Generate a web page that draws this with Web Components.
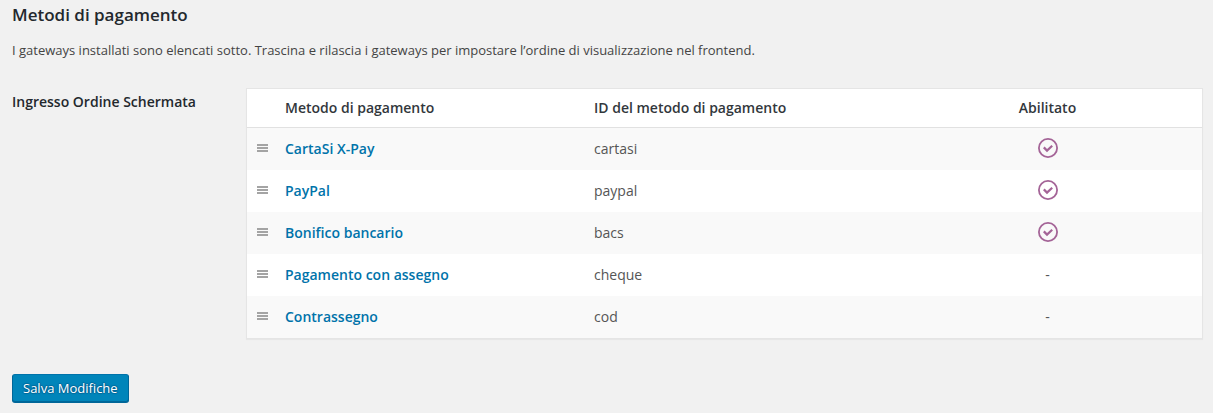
<!DOCTYPE html>
<html lang="it">
<head>
<meta charset="utf-8">
<title>Metodi di pagamento</title>
<style>
    body {
        margin: 0;
        background: #f1f1f1;
        color: #444;
        font: 13px/18px 'Open Sans', sans-serif;
    }
</style>
</head>
<body>

<settings-page>
    <span slot="title">Metodi di pagamento</span>
    <span slot="description">I gateways installati sono elencati sotto. Trascina e rilascia i gateways per impostare l’ordine di visualizzazione nel frontend.</span>

    <settings-row>
        <span slot="label">Ingresso Ordine Schermata</span>
        <gateway-table></gateway-table>
    </settings-row>

    <save-button slot="submit">Salva Modifiche</save-button>
</settings-page>

<script>
// small helper: attach a shadow root and fill it
function render(element, html) {
    const template = document.createElement('template');
    template.innerHTML = html;
    element.attachShadow({ mode: 'open' });
    element.shadowRoot.appendChild(template.content.cloneNode(true));
}

const gateways = [
    { id: 'cartasi', name: 'CartaSi X-Pay', enabled: true },
    { id: 'paypal', name: 'PayPal', enabled: true },
    { id: 'bacs', name: 'Bonifico bancario', enabled: true },
    { id: 'cheque', name: 'Pagamento con assegno', enabled: false },
    { id: 'cod', name: 'Contrassegno', enabled: false }
];

// the page: title, description, settings and the submit area
class SettingsPage extends HTMLElement {
    constructor() {
        super();
        render(this, `
            <style>
                :host {
                    display: block;
                    padding: 4px 10px 10px 12px;
                }

                h2 {
                    margin: 0;
                    color: #23282d;
                    font-size: 17px;
                    font-weight: 600;
                    line-height: 22px;
                }

                p {
                    margin: 15px 0 29px;
                }

                .submit {
                    margin-top: 35px;
                }
            </style>

            <h2><slot name="title"></slot></h2>
            <p><slot name="description"></slot></p>
            <slot></slot>
            <div class="submit"><slot name="submit"></slot></div>
        `);
    }
}

// one setting: label on the left, field on the right
class SettingsRow extends HTMLElement {
    constructor() {
        super();
        render(this, `
            <style>
                :host {
                    display: grid;
                    grid-template-columns: 224px 1fr;
                    gap: 10px;
                }

                .label {
                    padding-top: 5px;
                    color: #23282d;
                    font-size: 14px;
                    font-weight: 600;
                }
            </style>

            <div class="label"><slot name="label"></slot></div>
            <div><slot></slot></div>
        `);
    }
}

// the handle for dragging a row
class SortHandle extends HTMLElement {
    constructor() {
        super();
        render(this, `
            <style>
                :host {
                    display: block;
                    padding-bottom: 2px;
                    cursor: move;
                }

                svg {
                    display: block;
                }
            </style>

            <svg width="11" height="8" viewBox="0 0 11 8" fill="#a4a4a4" aria-hidden="true">
                <path d="M0 0h11v2H0zM0 3h11v2H0zM0 6h11v2H0z"/>
            </svg>
        `);
    }
}

// the round tick of an enabled gateway
class EnabledIcon extends HTMLElement {
    constructor() {
        super();
        render(this, `
            <style>
                :host {
                    display: block;
                    padding-bottom: 2px;
                }

                svg {
                    display: block;
                    margin: 0 auto;
                }
            </style>

            <svg width="20" height="20" viewBox="0 0 20 20" fill="none" stroke="#a46497" role="img" aria-label="Abilitato">
                <circle cx="10" cy="10" r="9.1" stroke-width="1.8"/>
                <path d="M5.8 9.4l3.2 3.2 5.2-4.9" stroke-width="2.2"/>
            </svg>
        `);
    }
}

class GatewayTable extends HTMLElement {
    constructor() {
        super();

        const rows = gateways.map(gateway => `
            <tr>
                <td class="sort"><sort-handle></sort-handle></td>
                <td><a href="#${gateway.id}">${gateway.name}</a></td>
                <td>${gateway.id}</td>
                <td class="status">${gateway.enabled ? '<enabled-icon></enabled-icon>' : '-'}</td>
            </tr>
        `).join('');

        render(this, `
            <style>
                :host {
                    display: block;
                    border: 1px solid #e5e5e5;
                    background: #fff;
                    box-shadow: 0 1px 1px rgba(0, 0, 0, 0.04);
                    font-size: 14px;
                }

                table {
                    width: 100%;
                    table-layout: fixed;
                    border-collapse: separate;
                    border-spacing: 0;
                }

                th, td {
                    padding: 10px;
                    text-align: left;
                    vertical-align: middle;
                }

                th {
                    border-bottom: 1px solid #e1e1e1;
                    color: #32373c;
                    font-weight: 600;
                }

                td {
                    height: 22px;
                    color: #555;
                }

                tbody tr:nth-child(odd) {
                    background: #f9f9f9;
                }

                .sort {
                    width: 8px;
                }

                .status {
                    text-align: center;
                }

                a {
                    color: #0073aa;
                    font-weight: 600;
                    text-decoration: none;
                }
            </style>

            <table>
                <thead>
                    <tr>
                        <th class="sort"></th>
                        <th>Metodo di pagamento</th>
                        <th>ID del metodo di pagamento</th>
                        <th class="status">Abilitato</th>
                    </tr>
                </thead>
                <tbody>${rows}</tbody>
            </table>
        `);
    }
}

class SaveButton extends HTMLElement {
    constructor() {
        super();
        render(this, `
            <style>
                :host {
                    display: block;
                }

                button {
                    display: block;
                    height: 28px;
                    padding: 0 10px;
                    border: 1px solid;
                    border-color: #0073aa #006799 #006799;
                    border-radius: 3px;
                    background: #0085ba;
                    box-shadow: 0 1px 0 #006799;
                    color: #fff;
                    cursor: pointer;
                    font: 13px/26px 'Open Sans', sans-serif;
                    text-shadow: 0 -1px 1px #006799, 1px 0 1px #006799, 0 1px 1px #006799, -1px 0 1px #006799;
                }
            </style>

            <button type="submit"><slot></slot></button>
        `);
    }
}

customElements.define('sort-handle', SortHandle);
customElements.define('enabled-icon', EnabledIcon);
customElements.define('gateway-table', GatewayTable);
customElements.define('save-button', SaveButton);
customElements.define('settings-row', SettingsRow);
customElements.define('settings-page', SettingsPage);
</script>
</body>
</html>
